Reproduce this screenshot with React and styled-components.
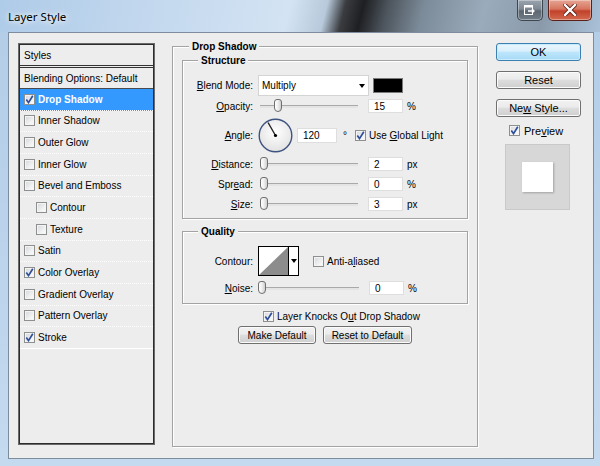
import React from "react";
import styled, { createGlobalStyle } from "styled-components";

const GlobalStyle = createGlobalStyle`
  html, body {
    margin: 0;
    padding: 0;
    overflow: hidden;
  }
  body {
    font-family: "Liberation Sans", Arial, sans-serif;
    font-size: 10px;
    color: #000;
  }
`;

const Window = styled.div`
  width: 600px;
  height: 466px;
  display: flex;
  flex-direction: column;
  background: linear-gradient(180deg, #b3cde7 0%, #bcd4ec 60%, #c4daef 100%);
`;

const TitleBar = styled.div`
  height: 32px;
  display: flex;
  align-items: flex-start;
  flex-shrink: 0;
  background: linear-gradient(
    104deg,
    #aecbe8 0%,
    #c3d8ee 25%,
    #d3e3f3 48%,
    #b7c9da 54%,
    #3a3c40 57%,
    #1e1f22 60%,
    #4c545c 64%,
    #7c8b99 70%,
    #9aabbb 80%,
    #8a9aaa 90%,
    #a9c1d8 100%
  );
`;

const Title = styled.div`
  font-family: "Noto Sans", "Liberation Sans", sans-serif;
  font-size: 11.5px;
  color: #000;
  margin: 9px 0 0 8px;
  text-shadow: 0 0 8px #fff, 0 0 4px #fff;
`;

const Captions = styled.div`
  margin-left: auto;
  margin-right: 8px;
  display: flex;
  gap: 5px;
`;

const CaptionButton = styled.div`
  width: ${p => p.$w}px;
  height: 21px;
  box-sizing: border-box;
  border: 1px solid ${p => (p.$close ? "#5b2118" : "#3e4650")};
  border-top: none;
  border-radius: 0 0 5px 5px;
  display: flex;
  align-items: center;
  justify-content: center;
  background: ${p =>
    p.$close
      ? "linear-gradient(180deg, #e6a594 0%, #d7755f 45%, #c2412a 55%, #d26a50 100%)"
      : "linear-gradient(180deg, #9aa4ae 0%, #7d8894 45%, #5d6772 55%, #707c88 100%)"};
  box-shadow: inset 0 0 0 1px rgba(255, 255, 255, 0.35);
`;

const Client = styled.div`
  flex: 1;
  margin: 0 6px 7px 8px;
  border: 1px solid #7d8d9d;
  background: #ededed;
  display: flex;
  align-items: flex-start;
  padding: 10px 0 0 9px;
  box-sizing: border-box;
`;

/* ---------- left styles list ---------- */

const StylesPanel = styled.div`
  width: 137px;
  height: 402px;
  box-sizing: border-box;
  border: 1px solid #6a6a6a;
  box-shadow: inset 0 0 0 1px #2c2c2c;
  padding: 1px;
  flex-shrink: 0;
`;

const PanelHeader = styled.div`
  height: 20px;
  display: flex;
  align-items: center;
  padding-left: 4px;
  border-bottom: 3px double #333;
`;

const BlendRow = styled.div`
  height: 21px;
  box-sizing: border-box;
  display: flex;
  align-items: center;
  padding-left: 4px;
  border-bottom: 1px solid #4a4a4a;
`;

const StyleRow = styled.div`
  height: 21.67px;
  box-sizing: border-box;
  display: flex;
  align-items: center;
  gap: 3px;
  padding-left: ${p => (p.$indent ? 16 : 4)}px;
  border-bottom: 1px ${p => (p.$last ? "solid" : "dotted")} #fff;
  background: ${p => (p.$active ? "#3399ff" : "transparent")};
  color: ${p => (p.$active ? "#fff" : "#000")};
  font-weight: ${p => (p.$active ? "bold" : "normal")};
`;

/* ---------- checkbox ---------- */

const Box = styled.span`
  width: 11px;
  height: 11px;
  box-sizing: border-box;
  border: 1px solid #8e8f8f;
  background: linear-gradient(135deg, #d3d6da 0%, #f4f4f4 70%, #fdfdfd 100%);
  box-shadow: inset 0 0 0 1px #f4f4f4;
  display: inline-flex;
  align-items: center;
  justify-content: center;
  flex-shrink: 0;
  margin-left: ${p => p.$ml || 0}px;
`;

const Check = ({ on, ml }) => (
  <Box $ml={ml}>
    {on && (
      <svg width="9" height="9" viewBox="0 0 9 9">
        <path d="M1.3 4.6 L3.5 7.6 L7.8 0.8" fill="none" stroke="#2f4f9b" strokeWidth="1.7" />
      </svg>
    )}
  </Box>
);

const Mn = styled.span`
  text-decoration: underline;
`;

/* ---------- middle column ---------- */

const Group = styled.fieldset`
  margin: ${p => p.$m || "0"};
  padding: ${p => p.$pad || "0"};
  min-width: 0;
  box-sizing: border-box;
  border: 1px solid #a3a3a3;
  box-shadow: inset 1px 1px 0 #fff, 1px 1px 0 #fff;
`;

const Legend = styled.legend`
  margin-left: ${p => p.$ml}px;
  padding: 0 3px;
  font-weight: bold;
  font-size: 10px;
  line-height: 13px;
  background: #ededed;
`;

const Main = styled(Group)`
  width: 306px;
  height: 407px;
  margin: -3px 0 0 17px;
  flex-shrink: 0;
`;

const Row = styled.div`
  height: ${p => p.$h}px;
  margin-top: ${p => p.$mt || 0}px;
  padding-left: ${p => p.$pl || 0}px;
  display: flex;
  align-items: center;
`;

const Label = styled.div`
  width: 70px;
  margin-right: 5px;
  text-align: right;
  flex-shrink: 0;
`;

const Select = styled.div`
  width: 111px;
  height: 21px;
  box-sizing: border-box;
  background: #fff;
  border: 1px solid #d4d4d4;
  display: flex;
  align-items: center;
  padding: 0 3px;
  justify-content: space-between;
`;

const Arrow = styled.span`
  width: 0;
  height: 0;
  border-left: 3.5px solid transparent;
  border-right: 3.5px solid transparent;
  border-top: 4px solid #000;
`;

const Swatch = styled.div`
  width: 30px;
  height: 15px;
  box-sizing: border-box;
  margin-left: 4px;
  background: #000;
  border: 1px solid #7a7a7a;
`;

const Track = styled.div`
  position: relative;
  width: ${p => p.$w}px;
  height: 14px;
  margin-left: ${p => p.$ml || 0}px;
  flex-shrink: 0;

  &::before {
    content: "";
    position: absolute;
    left: 0;
    right: 0;
    top: 6px;
    height: 2px;
    border-top: 1px solid #a9a9a9;
    background: #e4e4e4;
  }
`;

const Thumb = styled.div`
  position: absolute;
  top: 0;
  width: 8px;
  height: 13px;
  box-sizing: border-box;
  border: 1px solid #6f6f6f;
  border-radius: 3px 3px 4px 4px;
  background: linear-gradient(90deg, #ffffff 0%, #eeeeee 50%, #cfcfcf 100%);
`;

const Slider = ({ w, ml, value }) => (
  <Track $w={w} $ml={ml}>
    <Thumb style={{ left: Math.round(value * (w - 8)) }} />
  </Track>
);

const Field = styled.div`
  width: ${p => p.$w || 35}px;
  height: ${p => p.$h || 14}px;
  box-sizing: border-box;
  margin-left: ${p => p.$ml || 10}px;
  background: #fff;
  border: 1px solid #dedede;
  padding-left: 5px;
  display: flex;
  align-items: center;
  flex-shrink: 0;
`;

const Unit = styled.span`
  margin-left: ${p => p.$ml || 4}px;
`;

const Text = styled.span`
  margin-left: ${p => p.$ml || 3}px;
  white-space: nowrap;
`;

const Dial = () => (
  <svg width="35" height="35" viewBox="0 0 35 35">
    <defs>
      <radialGradient id="dialFill" cx="50%" cy="40%" r="60%">
        <stop offset="0%" stopColor="#ffffff" />
        <stop offset="100%" stopColor="#e2e2e2" />
      </radialGradient>
    </defs>
    <circle cx="17.5" cy="17.5" r="16.3" fill="url(#dialFill)" stroke="#3f5380" strokeWidth="1.4" />
    <line x1="17.5" y1="17.5" x2="10" y2="4.5" stroke="#222" strokeWidth="1.4" />
    <circle cx="17.5" cy="17.5" r="1.6" fill="#000" />
  </svg>
);

const ContourPick = styled.div`
  width: 41px;
  height: 30px;
  box-sizing: border-box;
  border: 1px solid #000;
  background: #fff;
  display: flex;
`;

const ContourArrow = styled.div`
  flex: 1;
  border-left: 1px solid #000;
  display: flex;
  align-items: center;
  justify-content: center;
`;

const ButtonRow = styled.div`
  display: flex;
  justify-content: center;
  gap: 7px;
  margin-top: 2px;
`;

const Button = styled.div`
  width: ${p => p.$w}px;
  height: 18px;
  box-sizing: border-box;
  border: 1px solid ${p => (p.$primary ? "#3c7fb1" : "#707070")};
  border-radius: 3px;
  display: flex;
  align-items: center;
  justify-content: center;
  white-space: pre;
  font-size: ${p => p.$fs || 10}px;
  background: ${p =>
    p.$primary
      ? "linear-gradient(180deg, #eaf6fd 0%, #d9f0fc 45%, #bee6fd 50%, #a7d9f5 100%)"
      : "linear-gradient(180deg, #f2f2f2 0%, #ebebeb 45%, #dddddd 50%, #cfcfcf 100%)"};
  box-shadow: inset 0 0 0 1px ${p => (p.$primary ? "#c8ecfd" : "#fbfbfb")};
`;

/* ---------- right column ---------- */

const Side = styled.div`
  width: 85px;
  margin-left: 18px;
  display: flex;
  flex-direction: column;
  gap: 10px;
  flex-shrink: 0;
`;

const PreviewRow = styled.div`
  display: flex;
  align-items: center;
  height: 13px;
  padding-left: 13px;
  margin-top: -3px;
  font-size: 11px;
`;

const PreviewBox = styled.div`
  width: 65px;
  height: 66px;
  margin: -3px 0 0 9px;
  box-sizing: border-box;
  border: 1px solid #c9c9c9;
  background: #d7d7d7;
  display: flex;
  align-items: center;
  justify-content: center;
`;

const PreviewSquare = styled.div`
  width: 31px;
  height: 30px;
  background: #fff;
  box-shadow: 1px 1px 2px rgba(0, 0, 0, 0.25);
`;

const styleItems = [
  { name: "Drop Shadow", on: true, active: true },
  { name: "Inner Shadow" },
  { name: "Outer Glow" },
  { name: "Inner Glow" },
  { name: "Bevel and Emboss" },
  { name: "Contour", indent: true },
  { name: "Texture", indent: true },
  { name: "Satin" },
  { name: "Color Overlay", on: true },
  { name: "Gradient Overlay" },
  { name: "Pattern Overlay" },
  { name: "Stroke", on: true, last: true },
];

export default function App() {
  return (
    <>
      <GlobalStyle />
      <Window>
        <TitleBar>
          <Title>Layer Style</Title>
          <Captions>
            <CaptionButton $w={26}>
              <svg width="12" height="10" viewBox="0 0 12 10">
                <rect x="0.5" y="0.5" width="8" height="9" fill="none" stroke="#fff" strokeWidth="1" />
                <rect x="0.5" y="0.5" width="8" height="2" fill="#fff" />
                <path d="M4 6 H10 M8 4 L10 6 L8 8" fill="none" stroke="#fff" strokeWidth="1.3" />
              </svg>
            </CaptionButton>
            <CaptionButton $w={44} $close>
              <svg width="14" height="12" viewBox="0 0 14 12">
                <path d="M2 1 L12 11 M12 1 L2 11" stroke="#5a1b12" strokeWidth="4" strokeLinecap="square" />
                <path d="M2 1 L12 11 M12 1 L2 11" stroke="#fff" strokeWidth="2.4" strokeLinecap="square" />
              </svg>
            </CaptionButton>
          </Captions>
        </TitleBar>

        <Client>
          <StylesPanel>
            <PanelHeader>Styles</PanelHeader>
            <BlendRow>Blending Options: Default</BlendRow>
            {styleItems.map(item => (
              <StyleRow key={item.name} $indent={item.indent} $active={item.active} $last={item.last}>
                <Check on={item.on} />
                {item.name}
              </StyleRow>
            ))}
          </StylesPanel>

          <Main $pad="1px 9px 0">
            <Legend $ml={7}>Drop Shadow</Legend>

            <Group $pad="0 0 4px">
              <Legend $ml={15}>Structure</Legend>
              <Row $h={21} $mt={8}>
                <Label>
                  <Mn>B</Mn>lend Mode:
                </Label>
                <Select>
                  Multiply
                  <Arrow />
                </Select>
                <Swatch />
              </Row>
              <Row $h={20}>
                <Label>
                  <Mn>O</Mn>pacity:
                </Label>
                <Slider w={98} ml={2} value={0.15} />
                <Field>15</Field>
                <Unit>%</Unit>
              </Row>
              <Row $h={38}>
                <Label>
                  <Mn>A</Mn>ngle:
                </Label>
                <Dial />
                <Field $w={40} $h={15} $ml={4}>
                  120
                </Field>
                <Unit $ml={6}>°</Unit>
                <Check on ml={8} />
                <Text>
                  Use <Mn>G</Mn>lobal Light
                </Text>
              </Row>
              <Row $h={20}>
                <Label>
                  <Mn>D</Mn>istance:
                </Label>
                <Slider w={98} ml={2} value={0} />
                <Field>2</Field>
                <Unit>px</Unit>
              </Row>
              <Row $h={20}>
                <Label>
                  Spr<Mn>e</Mn>ad:
                </Label>
                <Slider w={98} ml={2} value={0} />
                <Field>0</Field>
                <Unit>%</Unit>
              </Row>
              <Row $h={20}>
                <Label>
                  <Mn>S</Mn>ize:
                </Label>
                <Slider w={98} ml={2} value={0} />
                <Field>3</Field>
                <Unit>px</Unit>
              </Row>
            </Group>

            <Group $m="6px 0 0" $pad="0 0 5px">
              <Legend $ml={15}>Quality</Legend>
              <Row $h={30} $mt={8}>
                <Label>Contour:</Label>
                <ContourPick>
                  <svg width="29" height="28" viewBox="0 0 29 28">
                    <polygon points="0,28 29,0 29,28" fill="#8c8c8c" />
                  </svg>
                  <ContourArrow>
                    <Arrow />
                  </ContourArrow>
                </ContourPick>
                <Check ml={14} />
                <Text>
                  Anti-a<Mn>l</Mn>iased
                </Text>
              </Row>
              <Row $h={20} $mt={2}>
                <Label>
                  <Mn>N</Mn>oise:
                </Label>
                <Slider w={101} value={0} />
                <Field>0</Field>
                <Unit>%</Unit>
              </Row>
            </Group>

            <Row $h={16} $mt={4} $pl={81}>
              <Check on />
              <Text>
                Layer Knocks O<Mn>u</Mn>t Drop Shadow
              </Text>
            </Row>
            <ButtonRow>
              <Button $w={78}>Make Default</Button>
              <Button $w={89}>Reset to Default</Button>
            </ButtonRow>
          </Main>

          <Side>
            <Button $w={85} $primary $fs={11}>
              OK
            </Button>
            <Button $w={85} $fs={11}>
              Reset
            </Button>
            <Button $w={85} $fs={11}>
              <span>
                Ne<Mn>w</Mn> Style...
              </span>
            </Button>
            <PreviewRow>
              <Check on />
              <Text $ml={4}>
                Pre<Mn>v</Mn>iew
              </Text>
            </PreviewRow>
            <PreviewBox>
              <PreviewSquare />
            </PreviewBox>
          </Side>
        </Client>
      </Window>
    </>
  );
}
